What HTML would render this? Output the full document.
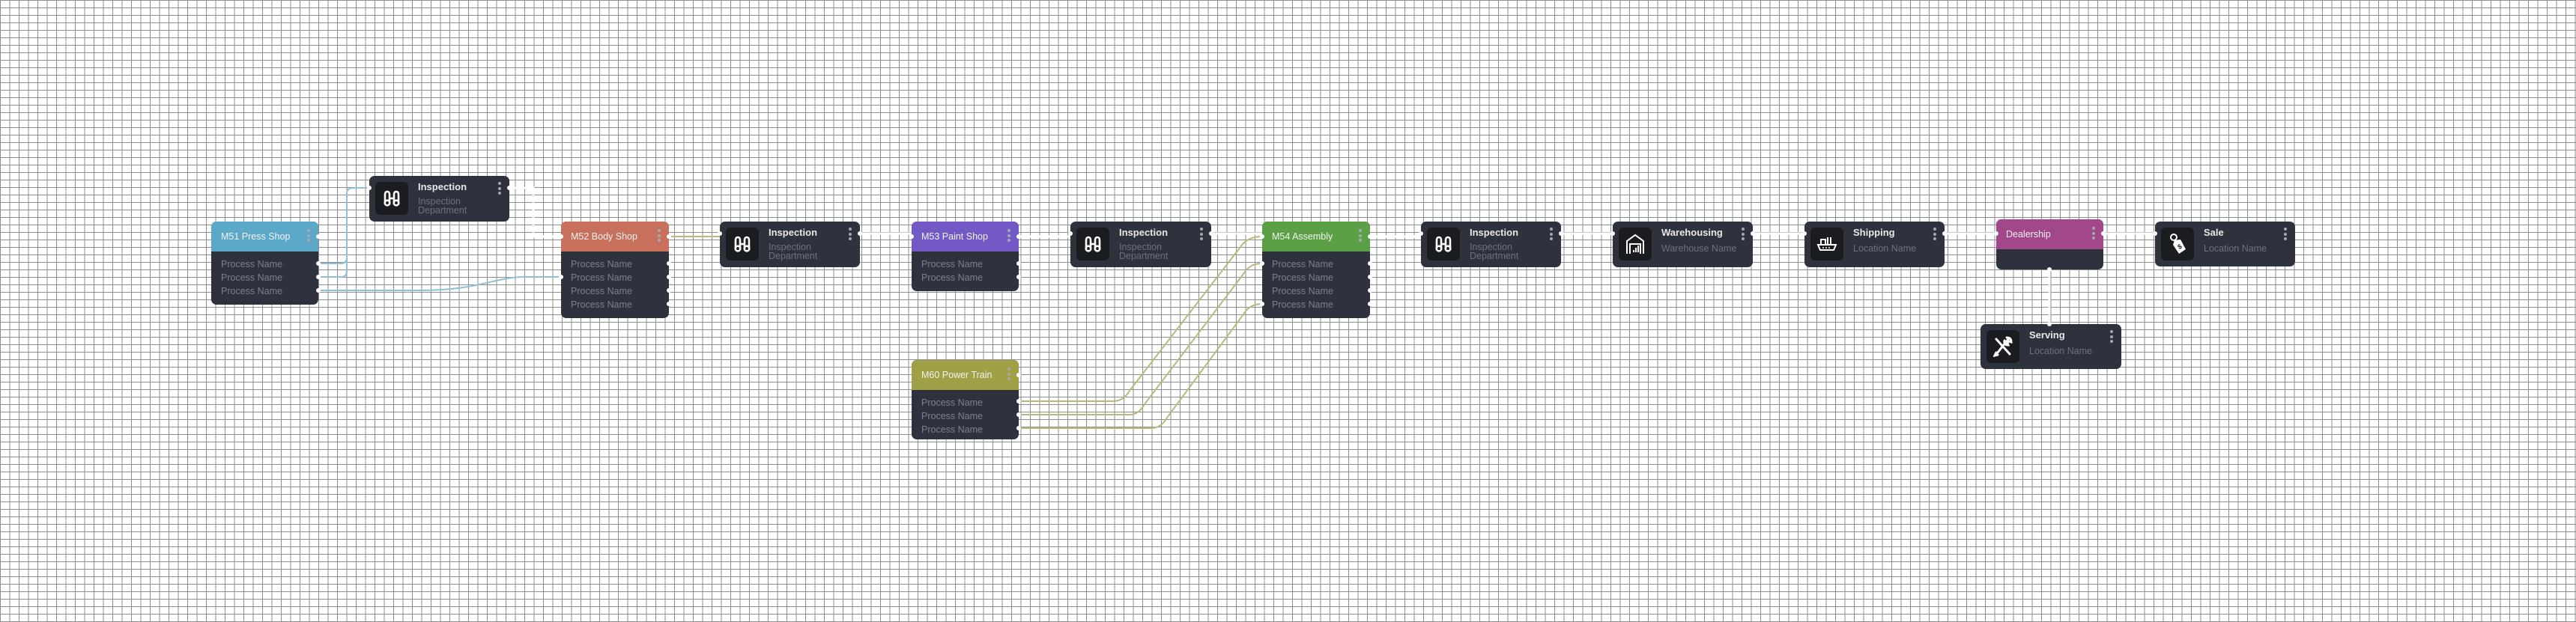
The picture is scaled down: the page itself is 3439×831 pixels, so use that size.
<!DOCTYPE html>
<html><head><meta charset="utf-8"><style>
html,body{margin:0;padding:0}
body{width:3439px;height:831px;position:relative;overflow:hidden;background-color:#fff;
background-image:linear-gradient(to right,#8e8e8e 1px,transparent 1px),linear-gradient(to bottom,#8e8e8e 1px,transparent 1px);
background-size:12.5px 10px;font-family:"Liberation Sans",sans-serif}
.n{position:absolute;background:#2e323c;border-radius:7px;color:#e6e6e6}
.h{height:40px;border-radius:7px 7px 0 0;font-size:12.5px;line-height:40px;padding-left:13px;color:#f2f2f2}
.r{font-size:12.5px;color:#7c808a;height:18px;line-height:18px;padding-left:13px}
.ic{position:absolute;left:8px;top:8px;width:44px;height:44px;background:#1b1c1f;border-radius:6px;display:flex;align-items:center;justify-content:center}
.t{position:absolute;left:65px;top:7px;font-size:13px;font-weight:bold;color:#e8e8e8}
.s{position:absolute;left:65px;top:28px;font-size:12.5px;color:#6c717c;line-height:12px}
.d{position:absolute;right:11px;width:4px}
.d i{display:block;width:4px;height:4px;border-radius:2px;background:#a5a8ad;margin-bottom:2.5px}
.p{position:absolute;width:6px;height:6px;border-radius:3px;background:#fff}
svg.e{position:absolute;left:0;top:0}
</style></head><body>
<svg class="e" width="3439" height="831" fill="none">
<g stroke="#8fc0d6" stroke-width="2">
<path d="M425 352 H455 Q463 352 463 344 V259 Q463 251 471 251 H493"/>
<path d="M425 370 H455 Q463 370 463 362 V259"/>
<path d="M425 388 H560 C640 388 660 370 700 370 H749"/>
</g>
<g stroke="#fff" stroke-width="3">
<path d="M680 251 H712 V316 H749"/>
<path d="M1148 312 H1217"/>
<path d="M1360 316 H1429"/>
<path d="M1617 312 H1685"/>
<path d="M1829 316 H1897"/>
<path d="M2084 312 H2153"/>
<path d="M2340 312 H2409"/>
<path d="M2596 312 H2665"/>
<path d="M2808 312 H2877"/>
<path d="M2736 360 V433"/>
</g>
<g stroke="#b9b97e" stroke-width="2">
<path d="M893 316 H961"/>
<path d="M1360 536 H1486 Q1500 536 1508 522 L1656 330 Q1665 316 1685 316"/>
<path d="M1360 554 H1508 Q1520 554 1528 540 L1660 366 Q1668 352 1685 352"/>
<path d="M1360 572 H1537 Q1550 572 1558 558 L1660 420 Q1668 406 1685 406"/>
</g>
</svg>

<div class="n" style="left:282px;top:296px;width:143px;height:111px">
<div class="h" style="background:#5ba8c8">M51 Press Shop</div>
<div class="d" style="top:10px"><i></i><i></i><i></i></div>
<div style="height:8px"></div>
<div class="r">Process Name</div><div class="r">Process Name</div><div class="r">Process Name</div>
</div>
<div class="n" style="left:749px;top:296px;width:144px;height:129px">
<div class="h" style="background:#c8705c">M52 Body Shop</div>
<div class="d" style="top:10px"><i></i><i></i><i></i></div>
<div style="height:8px"></div>
<div class="r">Process Name</div><div class="r">Process Name</div><div class="r">Process Name</div><div class="r">Process Name</div>
</div>
<div class="n" style="left:1217px;top:296px;width:143px;height:93px">
<div class="h" style="background:#7359c6">M53 Paint Shop</div>
<div class="d" style="top:10px"><i></i><i></i><i></i></div>
<div style="height:8px"></div>
<div class="r">Process Name</div><div class="r">Process Name</div>
</div>
<div class="n" style="left:1685px;top:296px;width:144px;height:129px">
<div class="h" style="background:#5b9f47">M54 Assembly</div>
<div class="d" style="top:10px"><i></i><i></i><i></i></div>
<div style="height:8px"></div>
<div class="r">Process Name</div><div class="r">Process Name</div><div class="r">Process Name</div><div class="r">Process Name</div>
</div>
<div class="n" style="left:1217px;top:481px;width:143px;height:106px">
<div class="h" style="background:#a0a046">M60 Power Train</div>
<div class="d" style="top:10px"><i></i><i></i><i></i></div>
<div style="height:8px"></div>
<div class="r">Process Name</div><div class="r">Process Name</div><div class="r">Process Name</div>
</div>
<div class="n" style="left:2665px;top:293px;width:143px;height:67px">
<div class="h" style="background:#a2488a">Dealership</div>
<div class="d" style="top:10px"><i></i><i></i><i></i></div>
</div>

<div class="n" style="left:493px;top:235px;width:187px;height:61px">
<div class="ic"><svg width="26" height="24" viewBox="0 0 26 24" fill="none" stroke="#fff" stroke-width="2.6"><path d="M4 18 V7 Q4 3 7 3 Q10 3 10 7 V18"/><path d="M16 18 V7 Q16 3 19 3 Q22 3 22 7 V18"/><path d="M10 12 H16"/><circle cx="7" cy="18" r="3.3"/><circle cx="19" cy="18" r="3.3"/></svg></div>
<div class="t">Inspection</div><div class="s">Inspection<br>Department</div>
<div class="d" style="top:8px"><i></i><i></i><i></i></div></div>

<div class="n" style="left:961px;top:296px;width:187px;height:61px">
<div class="ic"><svg width="26" height="24" viewBox="0 0 26 24" fill="none" stroke="#fff" stroke-width="2.6"><path d="M4 18 V7 Q4 3 7 3 Q10 3 10 7 V18"/><path d="M16 18 V7 Q16 3 19 3 Q22 3 22 7 V18"/><path d="M10 12 H16"/><circle cx="7" cy="18" r="3.3"/><circle cx="19" cy="18" r="3.3"/></svg></div>
<div class="t">Inspection</div><div class="s">Inspection<br>Department</div>
<div class="d" style="top:8px"><i></i><i></i><i></i></div></div>

<div class="n" style="left:1429px;top:296px;width:188px;height:61px">
<div class="ic"><svg width="26" height="24" viewBox="0 0 26 24" fill="none" stroke="#fff" stroke-width="2.6"><path d="M4 18 V7 Q4 3 7 3 Q10 3 10 7 V18"/><path d="M16 18 V7 Q16 3 19 3 Q22 3 22 7 V18"/><path d="M10 12 H16"/><circle cx="7" cy="18" r="3.3"/><circle cx="19" cy="18" r="3.3"/></svg></div>
<div class="t">Inspection</div><div class="s">Inspection<br>Department</div>
<div class="d" style="top:8px"><i></i><i></i><i></i></div></div>

<div class="n" style="left:1897px;top:296px;width:187px;height:61px">
<div class="ic"><svg width="26" height="24" viewBox="0 0 26 24" fill="none" stroke="#fff" stroke-width="2.6"><path d="M4 18 V7 Q4 3 7 3 Q10 3 10 7 V18"/><path d="M16 18 V7 Q16 3 19 3 Q22 3 22 7 V18"/><path d="M10 12 H16"/><circle cx="7" cy="18" r="3.3"/><circle cx="19" cy="18" r="3.3"/></svg></div>
<div class="t">Inspection</div><div class="s">Inspection<br>Department</div>
<div class="d" style="top:8px"><i></i><i></i><i></i></div></div>

<div class="n" style="left:2153px;top:296px;width:187px;height:61px">
<div class="ic"><svg width="26" height="28" viewBox="0 0 26 28" fill="none" stroke="#fff" stroke-width="2"><path d="M2 27 V10 L13 2 L24 10 V27"/><path d="M6 27 V14 H20 V27"/><g fill="#fff" stroke="none"><rect x="10" y="22" width="2" height="3"/><rect x="13" y="19" width="2" height="6"/><rect x="16" y="16" width="2" height="9"/></g></svg></div>
<div class="t">Warehousing</div><div class="s" style="top:30px">Warehouse Name</div>
<div class="d" style="top:8px"><i></i><i></i><i></i></div></div>

<div class="n" style="left:2409px;top:296px;width:187px;height:61px">
<div class="ic"><svg width="28" height="24" viewBox="0 0 28 24" fill="none" stroke="#fff" stroke-width="2"><path d="M6 13 V6 H12 V13"/><path d="M15 13 V3 M19 13 V3"/><path d="M2 13 H26 L23 20 H5 Z"/><g fill="#fff" stroke="none"><circle cx="9" cy="17" r="1"/><circle cx="13" cy="17" r="1"/><circle cx="17" cy="17" r="1"/></g></svg></div>
<div class="t">Shipping</div><div class="s" style="top:30px">Location Name</div>
<div class="d" style="top:8px"><i></i><i></i><i></i></div></div>

<div class="n" style="left:2877px;top:296px;width:187px;height:60px">
<div class="ic"><svg width="26" height="30" viewBox="0 0 26 30"><circle cx="8" cy="6" r="4" fill="none" stroke="#fff" stroke-width="2"/><path d="M9 10 L17 9 L24 22 L15 28 L7 16 Z" fill="#fff"/><text x="13.5" y="22" font-size="9" font-family="Liberation Sans" font-weight="bold" fill="#1b1c1f" transform="rotate(-30 15 19)">$</text></svg></div>
<div class="t">Sale</div><div class="s" style="top:30px">Location Name</div>
<div class="d" style="top:8px"><i></i><i></i><i></i></div></div>

<div class="n" style="left:2644px;top:433px;width:188px;height:60px">
<div class="ic"><svg width="26" height="28" viewBox="0 0 26 28" fill="none" stroke="#fff" stroke-width="3" stroke-linecap="round"><path d="M4 4 L22 24"/><path d="M20 4 L6 22"/><path d="M18 2 Q24 2 24 8 L21 7 L19 9 L20 12 Q14 12 15 6"/><path d="M4 22 L2 26 L6 25"/></svg></div>
<div class="t">Serving</div><div class="s" style="top:30px">Location Name</div>
<div class="d" style="top:8px"><i></i><i></i><i></i></div></div>

<div class="p" style="left:422px;top:313px"></div>
<div class="p" style="left:422px;top:349px"></div><div class="p" style="left:422px;top:367px"></div><div class="p" style="left:422px;top:385px"></div>
<div class="p" style="left:490px;top:248px"></div><div class="p" style="left:677px;top:248px"></div>
<div class="p" style="left:746px;top:313px"></div><div class="p" style="left:890px;top:313px"></div>
<div class="p" style="left:890px;top:349px"></div><div class="p" style="left:890px;top:367px"></div><div class="p" style="left:890px;top:385px"></div><div class="p" style="left:890px;top:403px"></div>
<div class="p" style="left:746px;top:367px"></div>
<div class="p" style="left:958px;top:309px"></div><div class="p" style="left:1145px;top:309px"></div>
<div class="p" style="left:1214px;top:313px"></div><div class="p" style="left:1357px;top:313px"></div>
<div class="p" style="left:1357px;top:349px"></div><div class="p" style="left:1357px;top:367px"></div>
<div class="p" style="left:1426px;top:309px"></div><div class="p" style="left:1614px;top:309px"></div>
<div class="p" style="left:1682px;top:313px"></div><div class="p" style="left:1826px;top:313px"></div>
<div class="p" style="left:1682px;top:349px"></div><div class="p" style="left:1682px;top:403px"></div>
<div class="p" style="left:1826px;top:349px"></div><div class="p" style="left:1826px;top:367px"></div><div class="p" style="left:1826px;top:385px"></div><div class="p" style="left:1826px;top:403px"></div>
<div class="p" style="left:1357px;top:498px"></div>
<div class="p" style="left:1357px;top:533px"></div><div class="p" style="left:1357px;top:551px"></div><div class="p" style="left:1357px;top:569px"></div>
<div class="p" style="left:1894px;top:309px"></div><div class="p" style="left:2081px;top:309px"></div>
<div class="p" style="left:2150px;top:309px"></div><div class="p" style="left:2337px;top:309px"></div>
<div class="p" style="left:2406px;top:309px"></div><div class="p" style="left:2593px;top:309px"></div>
<div class="p" style="left:2662px;top:309px"></div><div class="p" style="left:2805px;top:309px"></div>
<div class="p" style="left:2874px;top:309px"></div>
<div class="p" style="left:2733px;top:357px"></div><div class="p" style="left:2733px;top:430px"></div>
</body></html>
